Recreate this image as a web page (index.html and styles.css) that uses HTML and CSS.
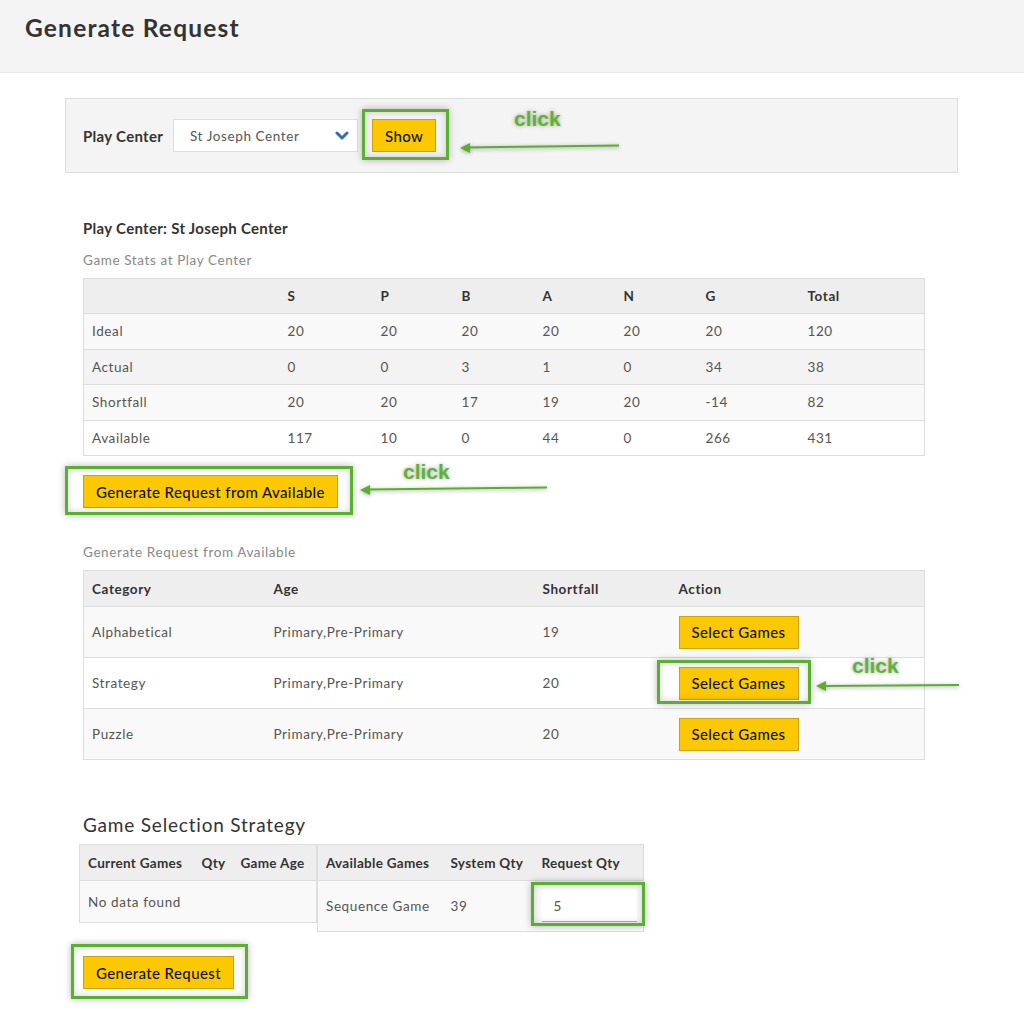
FILE: index.html
```html
<!DOCTYPE html>
<html>
<head>
<meta charset="utf-8">
<title>Generate Request</title>
<link rel="stylesheet" href="styles.css">
</head>
<body>
<header class="page-head">
  <h1 class="page-title">Generate Request</h1>
</header>

<main class="content">
  <section class="filter-box">
    <span class="filter-label">Play Center</span>
    <div class="select">
      <span class="select-text">St Joseph Center</span>
      <svg class="chevron" width="14" height="10" viewBox="0 0 14 10"><path d="M2 2 L7 7 L12 2" fill="none" stroke="#2f6fb5" stroke-width="3" stroke-linecap="round" stroke-linejoin="round"/></svg>
    </div>
    <span class="hl hl-show"><button class="btn">Show</button></span>
  </section>

  <section class="inner">
    <h4 class="center-title">Play Center: St Joseph Center</h4>
    <p class="caption">Game Stats at Play Center</p>
    <table class="grid stats">
      <colgroup>
        <col style="width:196px"><col style="width:93px"><col style="width:81px"><col style="width:81px"><col style="width:81px"><col style="width:82px"><col style="width:102px"><col>
      </colgroup>
      <thead>
        <tr><th></th><th>S</th><th>P</th><th>B</th><th>A</th><th>N</th><th>G</th><th>Total</th></tr>
      </thead>
      <tbody>
        <tr class="r1"><td>Ideal</td><td>20</td><td>20</td><td>20</td><td>20</td><td>20</td><td>20</td><td>120</td></tr>
        <tr class="r2"><td>Actual</td><td>0</td><td>0</td><td>3</td><td>1</td><td>0</td><td>34</td><td>38</td></tr>
        <tr class="r1"><td>Shortfall</td><td>20</td><td>20</td><td>17</td><td>19</td><td>20</td><td>-14</td><td>82</td></tr>
        <tr class="r3"><td>Available</td><td>117</td><td>10</td><td>0</td><td>44</td><td>0</td><td>266</td><td>431</td></tr>
      </tbody>
    </table>

    <div class="gen-avail-row">
      <span class="hl hl-avail"><button class="btn">Generate Request from Available</button></span>
    </div>

    <p class="caption caption-2">Generate Request from Available</p>
    <table class="grid cats">
      <colgroup><col style="width:182px"><col style="width:269px"><col style="width:136px"><col></colgroup>
      <thead>
        <tr><th>Category</th><th>Age</th><th>Shortfall</th><th>Action</th></tr>
      </thead>
      <tbody>
        <tr class="r1"><td>Alphabetical</td><td>Primary,Pre-Primary</td><td>19</td><td><button class="btn">Select Games</button></td></tr>
        <tr class="r3"><td>Strategy</td><td>Primary,Pre-Primary</td><td>20</td><td><span class="hl hl-select"><button class="btn">Select Games</button></span></td></tr>
        <tr class="r1"><td>Puzzle</td><td>Primary,Pre-Primary</td><td>20</td><td><button class="btn">Select Games</button></td></tr>
      </tbody>
    </table>

    <h3 class="strategy-title">Game Selection Strategy</h3>
    <div class="strategy">
      <table class="grid small left">
        <colgroup><col style="width:114px"><col style="width:39px"><col></colgroup>
        <thead><tr><th>Current Games</th><th>Qty</th><th>Game Age</th></tr></thead>
        <tbody><tr class="r1"><td colspan="3">No data found</td></tr></tbody>
      </table>
      <table class="grid small right">
        <colgroup><col style="width:125px"><col style="width:91px"><col></colgroup>
        <thead><tr><th>Available Games</th><th>System Qty</th><th>Request Qty</th></tr></thead>
        <tbody><tr class="r1"><td>Sequence Game</td><td>39</td><td><span class="hl hl-input"><input class="qty" type="text" value="5"></span></td></tr></tbody>
      </table>
    </div>

    <div class="gen-row">
      <span class="hl hl-gen"><button class="btn">Generate Request</button></span>
    </div>
  </section>
</main>

<div class="note note-1">
  <span class="click">click</span>
  <svg class="arrow" width="164" height="12" viewBox="0 0 164 12"><path d="M8 6.5 L160 4.5" stroke="#57b02c" stroke-width="2" fill="none"/><path d="M1 7 L11 2 L11 12 Z" fill="#57b02c"/></svg>
</div>
<div class="note note-2">
  <span class="click">click</span>
  <svg class="arrow" width="192" height="12" viewBox="0 0 192 12"><path d="M8 6.5 L188 4.5" stroke="#57b02c" stroke-width="2" fill="none"/><path d="M1 7 L11 2 L11 12 Z" fill="#57b02c"/></svg>
</div>
<div class="note note-3">
  <span class="click">click</span>
  <svg class="arrow" width="148" height="12" viewBox="0 0 148 12"><path d="M8 6 L144 5" stroke="#57b02c" stroke-width="2" fill="none"/><path d="M1 6 L11 1 L11 11 Z" fill="#57b02c"/></svg>
</div>
</body>
</html>
```

FILE: styles.css
```css
* { box-sizing: border-box; }
html, body { margin: 0; padding: 0; background: #fff; }
body {
  font-family: "Lato", "Open Sans", sans-serif;
  color: #555;
  font-size: 13.5px;
  letter-spacing: 0.6px;
  position: relative;
  width: 1024px;
  min-height: 1020px;
}

.page-head {
  height: 73px;
  background: #f4f4f4;
  border-bottom: 1px solid #e6e6e6;
  padding: 12px 0 0 25px;
}
.page-title {
  margin: 0;
  font-size: 24.5px;
  line-height: 32px;
  font-weight: 700;
  letter-spacing: 1.2px;
  color: #333;
}

.content { padding: 25px 66px 0 65px; }

.filter-box {
  height: 75px;
  background: #f4f4f4;
  border: 1px solid #ddd;
  display: flex;
  align-items: center;
  padding: 0 0 0 17px;
}
.filter-label {
  font-size: 15px;
  font-weight: 700;
  letter-spacing: 0.3px;
  color: #333;
  width: 90px;
}
.select {
  width: 185px;
  height: 33px;
  background: #fff;
  border: 1px solid #ddd;
  display: flex;
  align-items: center;
  justify-content: space-between;
  padding: 0 8px 0 16px;
  margin-right: 14px;
  color: #555;
  font-size: 13.5px;
}
.chevron { display: block; }

.btn {
  font-family: inherit;
  font-size: 15px;
  font-weight: 500;
  letter-spacing: 0.4px;
  color: #111;
  background: #fcc800;
  border: 1px solid #d2a300;
  height: 33px;
  padding: 0 12px;
  margin: 0;
  cursor: pointer;
}

.hl { position: relative; display: inline-block; vertical-align: middle; }
.hl::after {
  content: "";
  position: absolute;
  border: 3px solid #58b02e;
  box-shadow: 0 0 7px rgba(0,0,0,0.28), inset 0 0 7px rgba(0,0,0,0.18);
  pointer-events: none;
}
.hl-show::after { left: -10px; right: -13px; top: -10px; bottom: -8px; }
.hl-avail::after { left: -18px; right: -15px; top: -9px; bottom: -7px; }
.hl-select::after { left: -22px; right: -12px; top: -7px; bottom: -4px; }
.hl-input::after { left: -11px; right: -8px; top: -8px; bottom: -4px; }
.hl-gen::after { left: -12px; right: -14px; top: -12px; bottom: -10px; }

.inner { padding-left: 18px; }
.center-title {
  margin: 45px 0 0;
  font-size: 15px;
  line-height: 20px;
  font-weight: 700;
  letter-spacing: 0.3px;
  color: #333;
}
.caption {
  margin: 13px 0 0;
  font-size: 13.5px;
  line-height: 18px;
  color: #888;
}
.caption-2 { margin-top: 35px; }

.grid {
  border-collapse: collapse;
  table-layout: fixed;
  border: 1px solid #ddd;
  margin-top: 9px;
}
.stats, .cats { width: 842px; }
.grid th {
  background: #eee;
  color: #333;
  font-weight: 700;
  font-size: 13.5px;
  text-align: left;
  padding: 0 8px;
  height: 35px;
}
.grid td {
  border-top: 1px solid #ddd;
  padding: 0 8px;
  height: 35.5px;
  color: #555;
  font-size: 13.5px;
}
.r1 td { background: #f9f9f9; }
.r2 td { background: #f3f3f3; }
.r3 td { background: #fff; }

.cats th { height: 36px; }
.cats td { height: 51px; }

.gen-avail-row { margin-top: 19px; height: 33px; }

.strategy-title {
  margin: 53px 0 0;
  font-size: 19px;
  line-height: 24px;
  font-weight: 400;
  letter-spacing: 0.8px;
  color: #333;
}
.strategy {
  display: flex;
  align-items: flex-start;
  margin-left: -4px;
  margin-top: 7px;
}
.strategy .grid { margin-top: 0; }
.small.left { width: 238px; }
.small.right { width: 327px; border-left: none; }
.small th { height: 36px; white-space: nowrap; letter-spacing: 0.3px; }
.small.left td { height: 42px; }
.small.right td { height: 51px; }
.small.right th:first-child, .small.right td:first-child { border-left: 1px solid #ddd; }

.qty {
  width: 95px;
  height: 32px;
  border: none;
  border-bottom: 1px solid #aaa;
  background: #fff;
  font-family: inherit;
  font-size: 13.5px;
  color: #555;
  padding: 0 12px;
  display: block;
}

.gen-row { margin-top: 24px; height: 33px; }

.note { position: absolute; }
.click {
  position: absolute;
  font-family: "Liberation Sans", Arial, sans-serif;
  font-weight: 700;
  font-size: 21px;
  letter-spacing: 0;
  color: #5cb334;
  text-shadow: 0 0 4px rgba(0,0,0,0.35);
}
.arrow { position: absolute; filter: drop-shadow(0 1px 2px rgba(0,0,0,0.35)); overflow: visible; }
.note-1 { left: 459px; top: 107px; }
.note-1 .click { left: 55px; top: 0; }
.note-1 .arrow { left: 0; top: 34px; }
.note-2 { left: 359px; top: 460px; }
.note-2 .click { left: 44px; top: 0; }
.note-2 .arrow { left: 0; top: 23px; }
.note-3 { left: 815px; top: 654px; }
.note-3 .click { left: 37px; top: 0; }
.note-3 .arrow { left: 0; top: 26px; }
```
